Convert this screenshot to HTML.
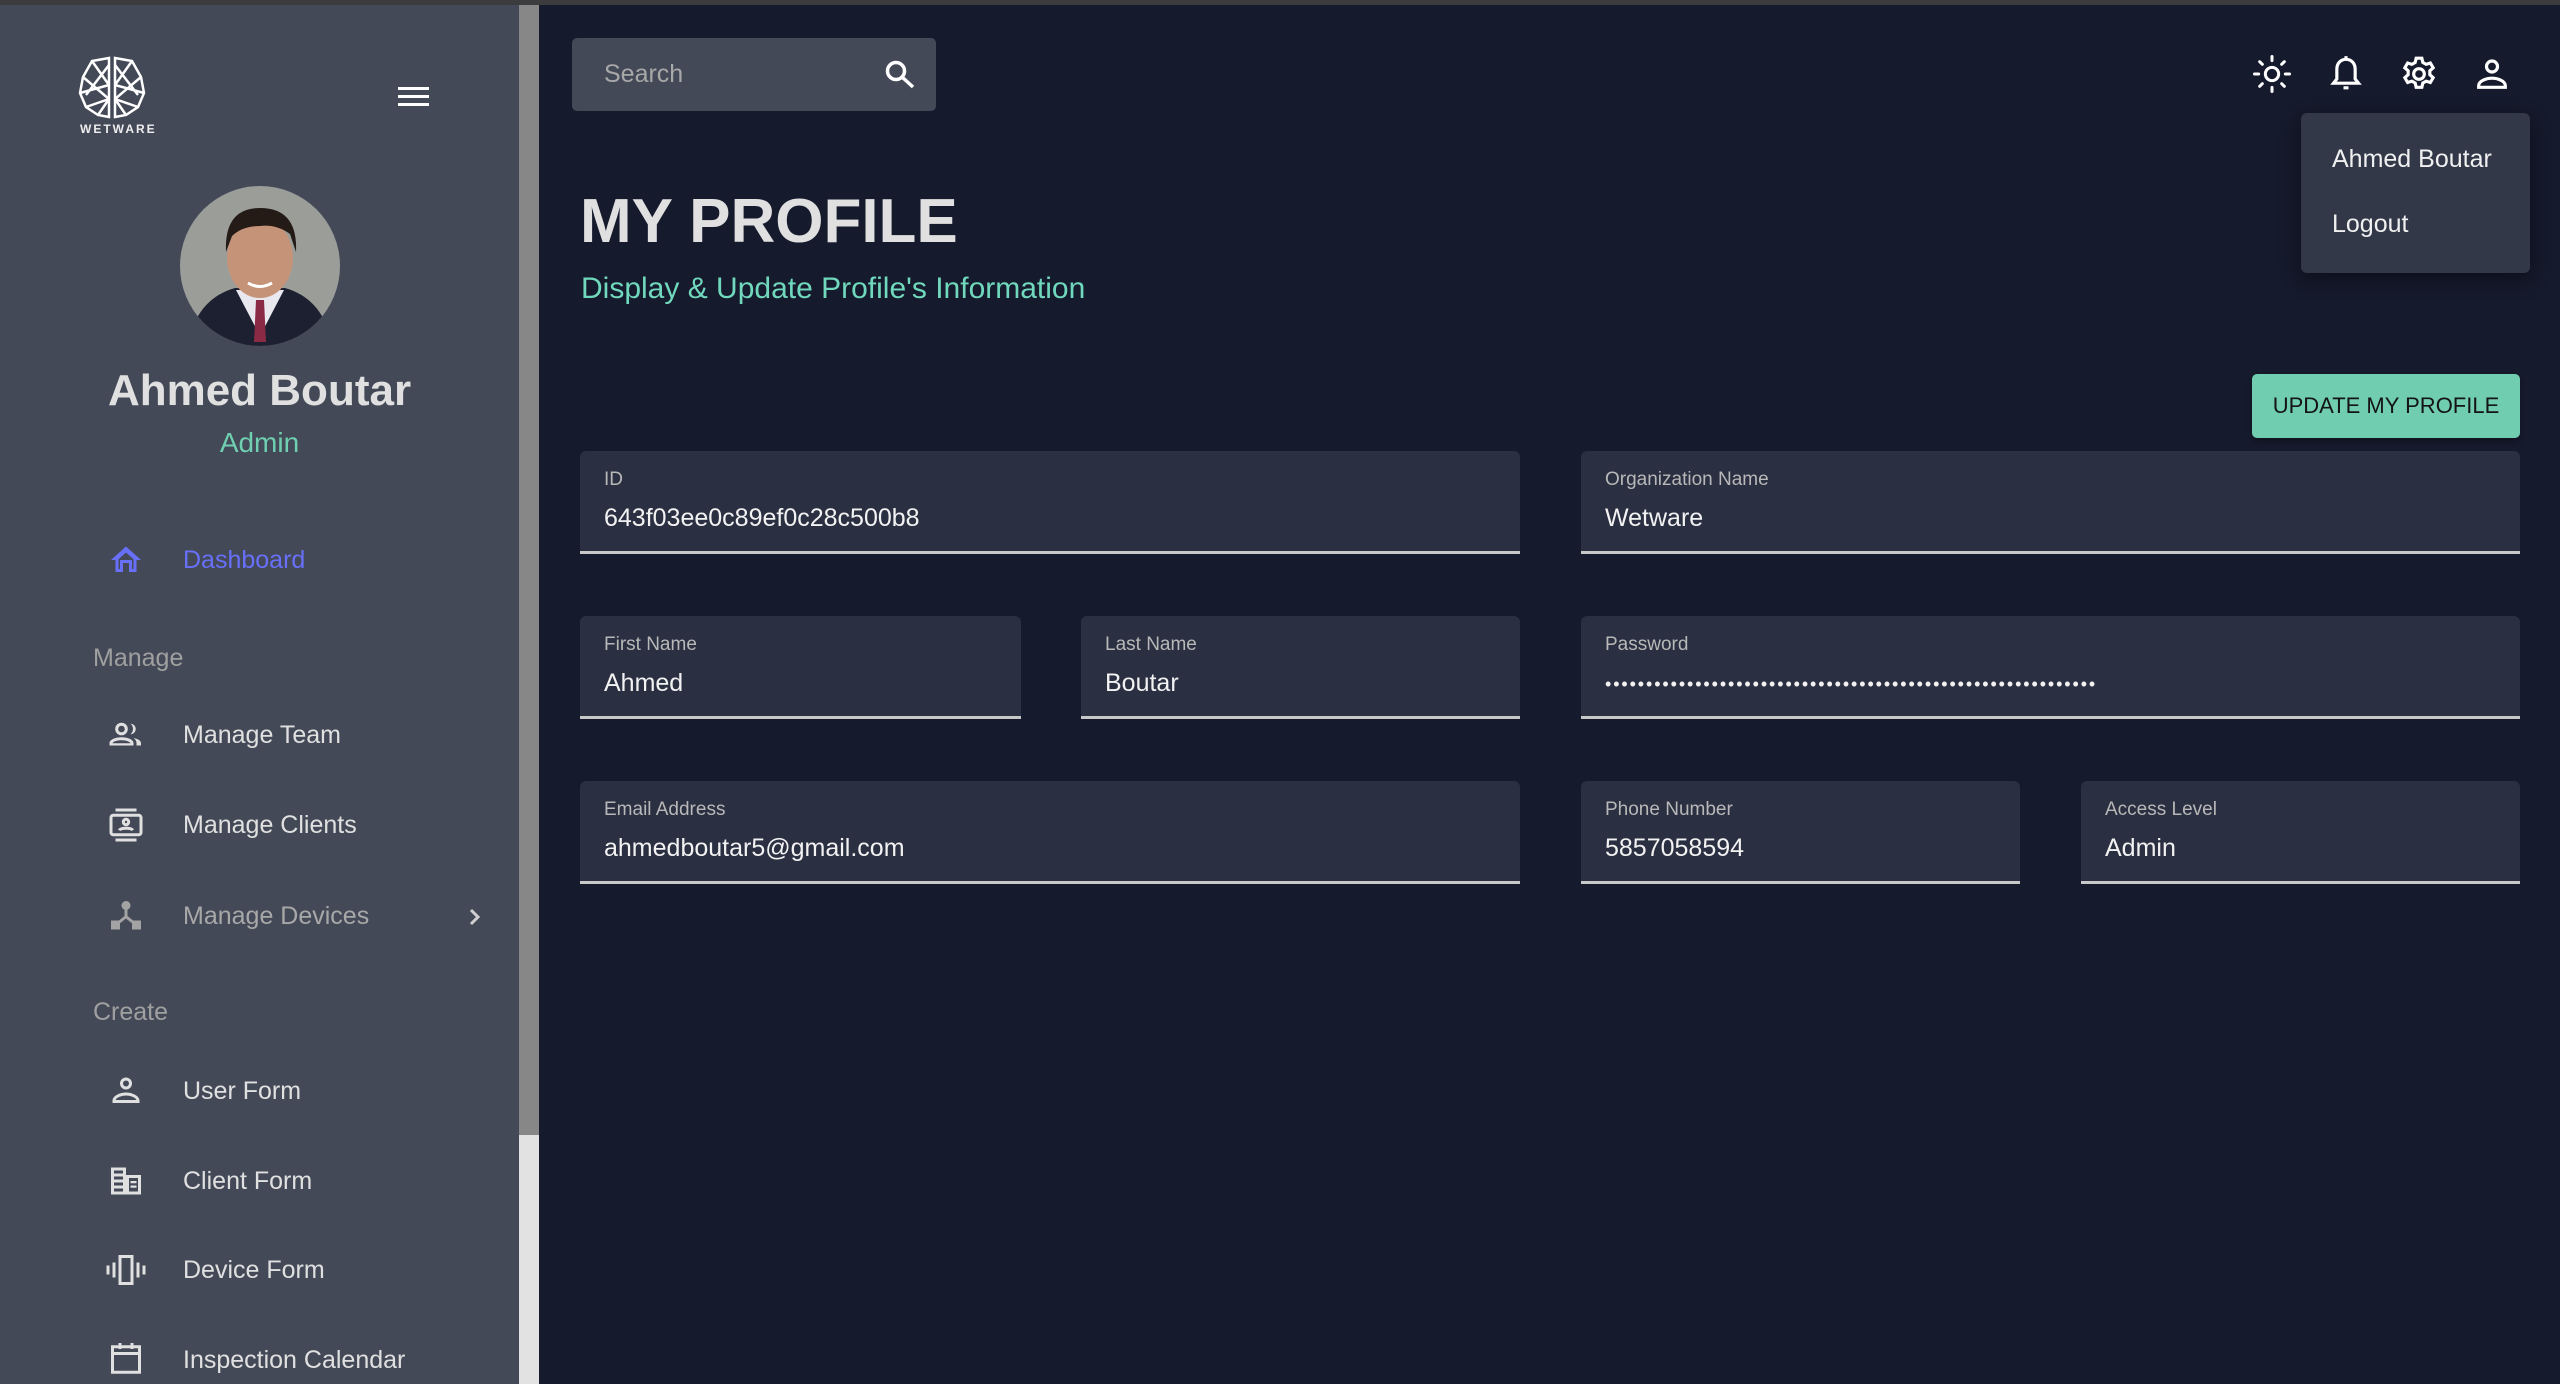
<!DOCTYPE html>
<html><head><meta charset="utf-8"><style>
*{margin:0;padding:0;box-sizing:border-box}
body{width:2560px;height:1384px;overflow:hidden;background:#151a2c;font-family:"Liberation Sans",sans-serif;position:relative;color:#e0e0e0}
.a{position:absolute}
.topline{left:0;top:0;width:2560px;height:5px;background:#3c3c3e}
.side{left:0;top:5px;width:519px;height:1379px;background:#434957}
.sb{left:519px;top:5px;width:20px;height:1130px;background:#878787}
.sbt{left:519px;top:1135px;width:20px;height:249px;background:#e2e2e2}
.nav{position:absolute;left:183px;font-size:25px;color:#e0e0e0;line-height:30px}
.ic{position:absolute;left:108px;width:36px;height:36px}
.sec{position:absolute;left:93px;font-size:25px;color:#a0a0a0;line-height:30px}
.field{position:absolute;background:#2a2f41;border-radius:6px 6px 0 0;border-bottom:3px solid #c8c8c8;height:103px}
.field .l{position:absolute;left:24px;top:18px;font-size:19px;color:#b8b8b8}
.field .v{position:absolute;left:24px;top:53px;font-size:25px;color:#f2f2f2}
.dd div{position:absolute;left:31px;font-size:25px;color:#f0f0f0}
</style></head><body>
<div class="a topline"></div>
<div class="a side"></div>
<div class="a sb"></div><div class="a sbt"></div>

<svg class="a" style="left:78px;top:55px" width="68" height="66" viewBox="0 0 68 66" fill="none" stroke="#fff" stroke-width="2.5">
<path d="M31 3 L14 6 L5 22 L2 38 L8 52 L20 60 L31 62 Z"/>
<path d="M37 3 L54 6 L63 22 L66 38 L60 52 L48 60 L37 62 Z"/>
<path d="M14 6 L31 30 M31 10 L8 40 M5 22 L31 44 M2 38 L31 30 M8 52 L31 44 M20 60 L31 44"/>
<path d="M54 6 L37 30 M37 10 L60 40 M63 22 L37 44 M66 38 L37 30 M60 52 L37 44 M48 60 L37 44"/>
</svg>
<div class="a" style="left:80px;top:122px;font-size:12px;font-weight:bold;letter-spacing:2px;color:#eee">WETWARE</div>
<div class="a" style="left:398px;top:87px;width:31px;height:3px;background:#fff"></div>
<div class="a" style="left:398px;top:95px;width:31px;height:3px;background:#fff"></div>
<div class="a" style="left:398px;top:103px;width:31px;height:3px;background:#fff"></div>

<svg class="a" style="left:180px;top:186px" width="160" height="160" viewBox="0 0 160 160">
<defs><clipPath id="c"><circle cx="80" cy="80" r="80"/></clipPath></defs>
<g clip-path="url(#c)">
<rect width="160" height="160" fill="#9b9d99"/>
<path d="M10 150 Q20 112 55 102 L105 102 Q140 112 150 150 L150 170 L10 170Z" fill="#1c2030"/>
<path d="M56 104 L80 150 L104 104 Z" fill="#e8e8ee"/>
<path d="M76 114 L84 114 L86 156 L74 156Z" fill="#8a2a44"/>
<ellipse cx="80" cy="72" rx="33" ry="40" fill="#c59378"/>
<path d="M46 66 Q44 22 80 22 Q118 22 116 66 L110 48 Q96 38 80 40 Q62 40 52 50Z" fill="#241a16"/>
<path d="M68 97 Q80 104 92 97" stroke="#fff" stroke-width="3" fill="none"/>
</g></svg>
<div class="a" style="left:0;width:519px;top:366px;text-align:center;font-size:44px;font-weight:bold;color:#e0e0e0">Ahmed Boutar</div>
<div class="a" style="left:0;width:519px;top:427px;text-align:center;font-size:28px;color:#6fcfb0">Admin</div>

<svg class="ic" style="top:542px" viewBox="0 0 24 24" fill="#6870fa"><path d="M12 3 L2 12 H5 V20 H10 V14 H14 V20 H19 V12 H22Z M7 11.5 L12 7 L17 11.5 V18 H16 V12 H8 V18 H7Z"/></svg>
<div class="nav" style="top:545px;color:#6870fa">Dashboard</div>
<div class="sec" style="top:643px">Manage</div>
<svg class="ic" style="top:717px" viewBox="0 0 24 24" fill="#e0e0e0"><circle cx="9" cy="8" r="3.2" fill="none" stroke="#e0e0e0" stroke-width="2"/><path d="M15 4.5a3.5 3.5 0 0 1 0 7 4.5 4.5 0 0 0 0-7z"/><path d="M1 19v-1.5C1 15 5 13.5 9 13.5S17 15 17 17.5V19Z M3 17.5h12C14.5 16.3 12 15.5 9 15.5S3.5 16.3 3 17.5Z" fill-rule="evenodd"/><path d="M17 14c2.5 .5 5 1.5 5 3.5V19h-3v-1.5c0-1.5-.8-2.6-2-3.5z"/></svg>
<div class="nav" style="top:720px">Manage Team</div>
<svg class="ic" style="top:807px" viewBox="0 0 24 24" fill="none" stroke="#e0e0e0" stroke-width="2"><path d="M5 2h14M5 22h14"/><rect x="2" y="5.5" width="20" height="13" rx="1.5"/><circle cx="12" cy="10" r="1.8"/><path d="M7.5 15.5c1-1.8 8-1.8 9 0"/></svg>
<div class="nav" style="top:810px">Manage Clients</div>
<svg class="ic" style="top:898px" viewBox="0 0 24 24" fill="#a3a3a3"><circle cx="12" cy="5" r="3"/><path d="M11 7h2v5l5 4-1.2 1.5L12 13.7 7.2 17.5 6 16l5-4z"/><rect x="2" y="15" width="6" height="6"/><rect x="16" y="15" width="6" height="6"/></svg>
<div class="nav" style="top:901px;color:#a8a8a8">Manage Devices</div>
<svg class="a" style="left:466px;top:906px" width="18" height="22" viewBox="0 0 18 22"><path d="M5 4 L12 11 L5 18" stroke="#d0d0d0" stroke-width="3" fill="none"/></svg>
<div class="sec" style="top:997px">Create</div>
<svg class="ic" style="top:1073px" viewBox="0 0 24 24" fill="none" stroke="#e0e0e0" stroke-width="2"><circle cx="12" cy="7" r="3"/><path d="M4 19v-.5C4 15.5 9 14 12 14s8 1.5 8 4.5V19Z"/></svg>
<div class="nav" style="top:1076px">User Form</div>
<svg class="ic" style="top:1163px" viewBox="0 0 24 24" fill="#e0e0e0"><path d="M2 3h10v18H2zM4 5v2h6V5zm0 4v2h6V9zm0 4v2h6v-2zm0 4v2h6v-2zM12 8h10v13H12zm2 2v9h6v-9zm1 2h4v1.5h-4zm0 3h4v1.5h-4z" fill-rule="evenodd"/></svg>
<div class="nav" style="top:1166px">Client Form</div>
<svg class="ic" style="top:1252px;left:104px;width:44px" viewBox="0 0 28 24" fill="#e0e0e0"><path d="M9 2h10v20H9zm2 2v16h6V4z" fill-rule="evenodd"/><rect x="5" y="7" width="2" height="10"/><rect x="21" y="7" width="2" height="10"/><rect x="1" y="9" width="2" height="6"/><rect x="25" y="9" width="2" height="6"/></svg>
<div class="nav" style="top:1255px">Device Form</div>
<svg class="ic" style="top:1340px" viewBox="0 0 24 24" fill="none" stroke="#e0e0e0" stroke-width="2"><rect x="3" y="4.5" width="18" height="17"/><path d="M3 9h18M8 2v4M16 2v4"/></svg>
<div class="nav" style="top:1345px">Inspection Calendar</div>

<div class="a" style="left:572px;top:38px;width:364px;height:73px;background:#434957;border-radius:5px"></div>
<div class="a" style="left:604px;top:60px;font-size:25px;color:#a8a8a8">Search</div>
<svg class="a" style="left:884px;top:59px" width="32" height="30" viewBox="0 0 32 30" fill="none" stroke="#fff" stroke-width="3.5"><circle cx="12" cy="12" r="8.5"/><path d="M18 18 L29 28"/></svg>

<svg class="a" style="left:2252px;top:54px" width="40" height="40" viewBox="0 0 24 24" fill="none" stroke="#fff" stroke-width="1.8" stroke-linecap="round"><circle cx="12" cy="12" r="4"/><path d="M12 1.5v2.5M12 20v2.5M1.5 12H4M20 12h2.5M4.6 4.6l1.6 1.6M17.8 17.8l1.6 1.6M4.6 19.4l1.6-1.6M17.8 6.2l1.6-1.6"/></svg>
<svg class="a" style="left:2326px;top:54px" width="40" height="40" viewBox="0 0 24 24" fill="none" stroke="#fff" stroke-width="1.9"><path d="M12 3.2c-3.4 0-5.5 2.6-5.5 6V15L4.5 17.5h15L17.5 15V9.2c0-3.4-2.1-6-5.5-6z"/><path d="M12 1.3v2M10.5 20.3h3"/></svg>
<svg class="a" style="left:2399px;top:54px" width="40" height="40" viewBox="0 0 24 24" fill="none" stroke="#fff" stroke-width="1.9"><circle cx="12" cy="12" r="3.2"/><path d="M10.3 2.5h3.4l.6 2.6 2 1.1 2.5-.8 1.7 2.9-2 1.8v2.3l2 1.8-1.7 2.9-2.5-.8-2 1.1-.6 2.6h-3.4l-.6-2.6-2-1.1-2.5.8-1.7-2.9 2-1.8v-2.3l-2-1.8 1.7-2.9 2.5.8 2-1.1z"/></svg>
<svg class="a" style="left:2472px;top:54px" width="40" height="40" viewBox="0 0 24 24" fill="none" stroke="#fff" stroke-width="1.9"><circle cx="12" cy="7.5" r="3.3"/><path d="M4 20v-1c0-3 5-4.5 8-4.5s8 1.5 8 4.5v1Z"/></svg>

<div class="a dd" style="left:2301px;top:113px;width:229px;height:160px;background:#323848;border-radius:6px;box-shadow:0 6px 20px rgba(0,0,0,.45)">
<div style="top:32px">Ahmed Boutar</div>
<div style="top:97px">Logout</div>
</div>

<div class="a" style="left:580px;top:186px;font-size:62px;font-weight:bold;color:#e0e0e0">MY PROFILE</div>
<div class="a" style="left:581px;top:272px;font-size:30px;color:#70d8bd">Display &amp; Update Profile's Information</div>
<div class="a" style="left:2252px;top:374px;width:268px;height:64px;background:#70cdb0;border-radius:5px;color:#141414;font-size:22px;text-align:center;line-height:64px;box-shadow:0 3px 6px rgba(0,0,0,.3)">UPDATE MY PROFILE</div>

<div class="field" style="left:580px;top:451px;width:940px"><div class="l">ID</div><div class="v">643f03ee0c89ef0c28c500b8</div></div>
<div class="field" style="left:1581px;top:451px;width:939px"><div class="l">Organization Name</div><div class="v">Wetware</div></div>
<div class="field" style="left:580px;top:616px;width:441px"><div class="l">First Name</div><div class="v">Ahmed</div></div>
<div class="field" style="left:1081px;top:616px;width:439px"><div class="l">Last Name</div><div class="v">Boutar</div></div>
<div class="field" style="left:1581px;top:616px;width:939px"><div class="l">Password</div><div class="v" style="font-size:18px;top:58px;letter-spacing:1.9px;white-space:nowrap">••••••••••••••••••••••••••••••••••••••••••••••••••••••••••••</div></div>
<div class="field" style="left:580px;top:781px;width:940px"><div class="l">Email Address</div><div class="v">ahmedboutar5@gmail.com</div></div>
<div class="field" style="left:1581px;top:781px;width:439px"><div class="l">Phone Number</div><div class="v">5857058594</div></div>
<div class="field" style="left:2081px;top:781px;width:439px"><div class="l">Access Level</div><div class="v">Admin</div></div>
</body></html>
